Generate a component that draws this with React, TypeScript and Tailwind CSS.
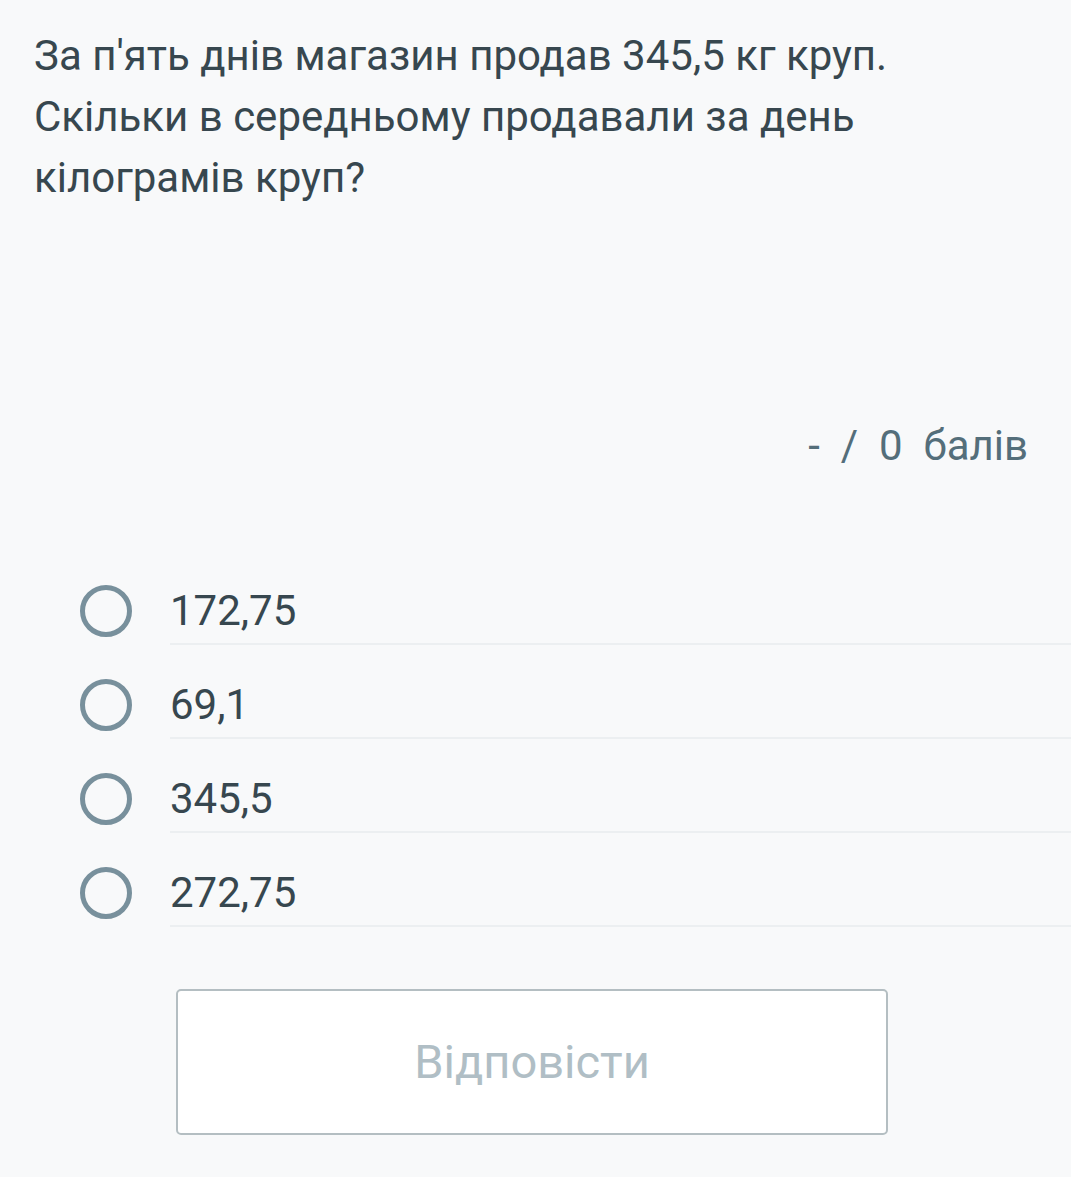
import React from 'react';

const options = ['172,75', '69,1', '345,5', '272,75'];

const App: React.FC = () => {
  return (
    <div className="min-h-[1177px] w-full bg-[#f8f9fa] font-['Roboto','Noto_Sans',sans-serif] text-[#37474f]">
      <div className="px-[34px] pt-[25px] text-[42px] leading-[61px]">
        За п'ять днів магазин продав 345,5 кг круп. Скільки в середньому продавали за день кілограмів круп?
      </div>

      <div className="mt-[207px] pr-[43px] text-right text-[42px] leading-[61px] text-[#546e7a]">
        -&nbsp;&nbsp;/&nbsp;&nbsp;0&nbsp;&nbsp;балів
      </div>

      <div className="mt-[75px]">
        {options.map((opt) => (
          <div key={opt} className="flex">
            <div className="flex w-[170px] shrink-0 pb-[9px] pt-[36px]">
              <div className="ml-[80px] flex h-[48px] items-center">
                <span className="block h-[52px] w-[52px] rounded-full border-[5px] border-[#78909c]" />
              </div>
            </div>
            <div className="flex-1 border-b-2 border-[#eceff1] pb-[8px] pt-[36px] text-[42px] leading-[48px]">
              {opt}
            </div>
          </div>
        ))}
      </div>

      <div className="ml-[176px] mt-[62px] flex h-[146px] w-[712px] items-center justify-center rounded-[5px] border-2 border-[#b4bec2] bg-white text-[47px] text-[#b0bec5]">
        Відповісти
      </div>
    </div>
  );
};

export default App;
